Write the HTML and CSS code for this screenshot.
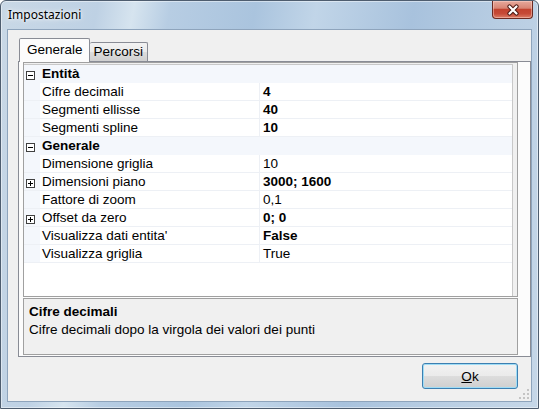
FILE: index.html
```html
<!DOCTYPE html>
<html lang="it">
<head>
<meta charset="utf-8">
<title>Impostazioni</title>
<link rel="stylesheet" href="styles.css">
</head>
<body>
<div class="window">
  <div class="titlebar">
    <span class="title">Impostazioni</span>
    <div class="close">
      <svg width="16" height="12" viewBox="0 0 16 12"><path d="M4.5 2.5 L11.5 9.5 M11.5 2.5 L4.5 9.5" stroke="#4a1812" stroke-width="4.2" stroke-linecap="round"/><path d="M4.5 2.5 L11.5 9.5 M11.5 2.5 L4.5 9.5" stroke="#fff" stroke-width="2.2" stroke-linecap="round"/></svg>
    </div>
  </div>
  <div class="client">
    <div class="tabctl">
      <div class="tabstrip">
        <div class="tab active">Generale</div>
        <div class="tab">Percorsi</div>
      </div>
      <div class="panel">
        <div class="gridview">
          <div class="rows">
            <div class="row cat"><span class="gut"><svg width="9" height="9" viewBox="0 0 9 9"><rect x="0.5" y="0.5" width="8" height="8" fill="#fff" stroke="#404040"/><path d="M2 4.5h5" stroke="#000"/></svg></span><span class="name">Entità</span></div>
            <div class="row"><span class="gut"></span><span class="name">Cifre decimali</span><span class="val b">4</span></div>
            <div class="row"><span class="gut"></span><span class="name">Segmenti ellisse</span><span class="val b">40</span></div>
            <div class="row"><span class="gut"></span><span class="name">Segmenti spline</span><span class="val b">10</span></div>
            <div class="row cat"><span class="gut"><svg width="9" height="9" viewBox="0 0 9 9"><rect x="0.5" y="0.5" width="8" height="8" fill="#fff" stroke="#404040"/><path d="M2 4.5h5" stroke="#000"/></svg></span><span class="name">Generale</span></div>
            <div class="row"><span class="gut"></span><span class="name">Dimensione griglia</span><span class="val">10</span></div>
            <div class="row"><span class="gut"><svg width="9" height="9" viewBox="0 0 9 9"><rect x="0.5" y="0.5" width="8" height="8" fill="#fff" stroke="#404040"/><path d="M2 4.5h5M4.5 2v5" stroke="#000"/></svg></span><span class="name">Dimensioni piano</span><span class="val b">3000; 1600</span></div>
            <div class="row"><span class="gut"></span><span class="name">Fattore di zoom</span><span class="val">0,1</span></div>
            <div class="row"><span class="gut"><svg width="9" height="9" viewBox="0 0 9 9"><rect x="0.5" y="0.5" width="8" height="8" fill="#fff" stroke="#404040"/><path d="M2 4.5h5M4.5 2v5" stroke="#000"/></svg></span><span class="name">Offset da zero</span><span class="val b">0; 0</span></div>
            <div class="row"><span class="gut"></span><span class="name">Visualizza dati entita'</span><span class="val b">False</span></div>
            <div class="row"><span class="gut"></span><span class="name">Visualizza griglia</span><span class="val">True</span></div>
          </div>
        </div>
        <div class="help">
          <div class="help-title">Cifre decimali</div>
          <div class="help-text">Cifre decimali dopo la virgola dei valori dei punti</div>
        </div>
      </div>
    </div>
    <div class="actions">
      <button class="btn"><u>O</u>k</button>
    </div>
    <svg class="grip" width="10" height="10" viewBox="0 0 10 10">
      <rect x="8" y="0" width="2" height="2" fill="#c4c4c4"/>
      <rect x="8" y="4" width="2" height="2" fill="#c4c4c4"/>
      <rect x="4" y="4" width="2" height="2" fill="#c4c4c4"/>
      <rect x="8" y="8" width="2" height="2" fill="#c4c4c4"/>
      <rect x="4" y="8" width="2" height="2" fill="#c4c4c4"/>
      <rect x="0" y="8" width="2" height="2" fill="#c4c4c4"/>
    </svg>
  </div>
</div>
</body>
</html>
```
FILE: styles.css
```css
html, body {
  margin: 0;
  padding: 0;
  background: #ffffff;
}

body {
  font-family: "Liberation Sans", Arial, sans-serif;
  color: #000;
}

.window {
  width: 539px;
  height: 409px;
  box-sizing: border-box;
  border: 1px solid #4e5d6f;
  border-radius: 6px 6px 0 0;
  padding: 0 6px 6px 6px;
  display: flex;
  flex-direction: column;
  background: linear-gradient(100deg, #c9d8e6 0%, #bed1e4 16%, #d6e4ef 22%, #b7cde3 28%, #aac4de 42%, #c1d5e8 52%, #a8c2dd 68%, #b9cee3 84%, #c6d7e8 100%);
  box-shadow: inset 0 0 0 1px rgba(255, 255, 255, 0.45);
}

.titlebar {
  height: 28px;
  display: flex;
  justify-content: space-between;
  align-items: flex-start;
}

.title {
  font-family: "Noto Sans", "Liberation Sans", sans-serif;
  font-size: 12px;
  line-height: 28px;
  padding-left: 1px;
  color: #000;
  text-shadow: 0 0 6px #ffffff, 0 0 3px #ffffff;
}

.close {
  width: 41px;
  height: 18px;
  margin-right: -1px;
  box-sizing: border-box;
  border: 1px solid #6b2a22;
  border-top: none;
  border-radius: 0 0 4px 4px;
  background: linear-gradient(#e6a99c 0%, #d88574 42%, #c2432f 50%, #c64a37 75%, #dc7e68 100%);
  box-shadow: inset 0 0 0 1px rgba(255, 220, 210, 0.45);
  display: flex;
  align-items: center;
  justify-content: center;
}

.client {
  flex: 1;
  border: 1px solid #8ea4bc;
  background: #f0f0f0;
  display: flex;
  flex-direction: column;
  position: relative;
  padding: 8px 0 0 10px;
}

.tabctl {
  width: 513px;
}

.tabstrip {
  display: flex;
  align-items: flex-end;
  height: 23px;
}

.tab {
  height: 19px;
  box-sizing: border-box;
  border: 1px solid #898c95;
  border-bottom: none;
  padding: 0 4px;
  font-size: 13.5px;
  line-height: 18px;
  background: linear-gradient(#f2f2f2 0%, #ebebeb 50%, #dddddd 50%, #cfcfcf 100%);
  border-radius: 2px 2px 0 0;
}

.tab.active {
  height: 24px;
  margin-left: 1px;
  margin-bottom: -1px;
  padding: 0 6px 0 7px;
  line-height: 22px;
  background: #fcfcfc;
  position: relative;
  z-index: 1;
}

.tab.active + .tab {
  border-left: none;
}

.panel {
  height: 296px;
  box-sizing: border-box;
  border: 1px solid #898c95;
  background: #fcfcfc;
  padding: 0 0 1px 4px;
  display: flex;
  flex-direction: column;
  gap: 1px;
}

.gridview {
  width: 495px;
  height: 235px;
  box-sizing: border-box;
  border: 1px solid #a0a0a0;
  background: #f0f0f0;
  padding: 1px 4px 0 0;
  display: flex;
}

.rows {
  flex: 1;
  background: #ffffff;
  border-top: 1px solid #c8c8c8;
  border-right: 1px solid #c8c8c8;
}

.row {
  display: grid;
  grid-template-columns: 16px 219px 1fr;
  height: 18px;
  font-size: 13.5px;
  line-height: 17px;
}

.row > span {
  border-bottom: 1px solid #edf0f5;
  white-space: nowrap;
  overflow: hidden;
}

.gut {
  background: #f4f7fc;
  display: flex;
  align-items: flex-start;
  padding: 6px 0 0 2px;
  box-sizing: border-box;
}

.gut svg {
  display: block;
}

.name {
  padding-left: 2px;
}

.val {
  border-left: 1px solid #edf0f5;
  padding-left: 3px;
}

.b {
  font-weight: bold;
}

.row.cat {
  grid-template-columns: 16px 1fr;
  background: #f4f7fc;
  font-weight: bold;
}

.row.cat > span {
  border-bottom-color: #f4f7fc;
}

.help {
  width: 495px;
  height: 57px;
  box-sizing: border-box;
  border: 1px solid #a0a0a0;
  background: #f0f0f0;
  padding: 4px 5px;
  font-size: 13.5px;
  line-height: 18px;
}

.help-title {
  font-weight: bold;
}

.actions {
  display: flex;
  justify-content: flex-end;
  padding: 6px 13px 0 0;
}

.btn {
  width: 96px;
  height: 26px;
  box-sizing: border-box;
  border: 1px solid #3c7fb1;
  border-radius: 3px;
  background: linear-gradient(#f2f2f2 0%, #ebebeb 48%, #dddddd 50%, #cfcfcf 100%);
  box-shadow: inset 0 0 0 1px #9fdcf5;
  font-family: "Liberation Sans", Arial, sans-serif;
  font-size: 13.5px;
  color: #000;
  padding: 0;
  margin: 0;
}

.btn u {
  text-decoration: underline;
}

.grip {
  position: absolute;
  right: 2px;
  bottom: 2px;
}
```
